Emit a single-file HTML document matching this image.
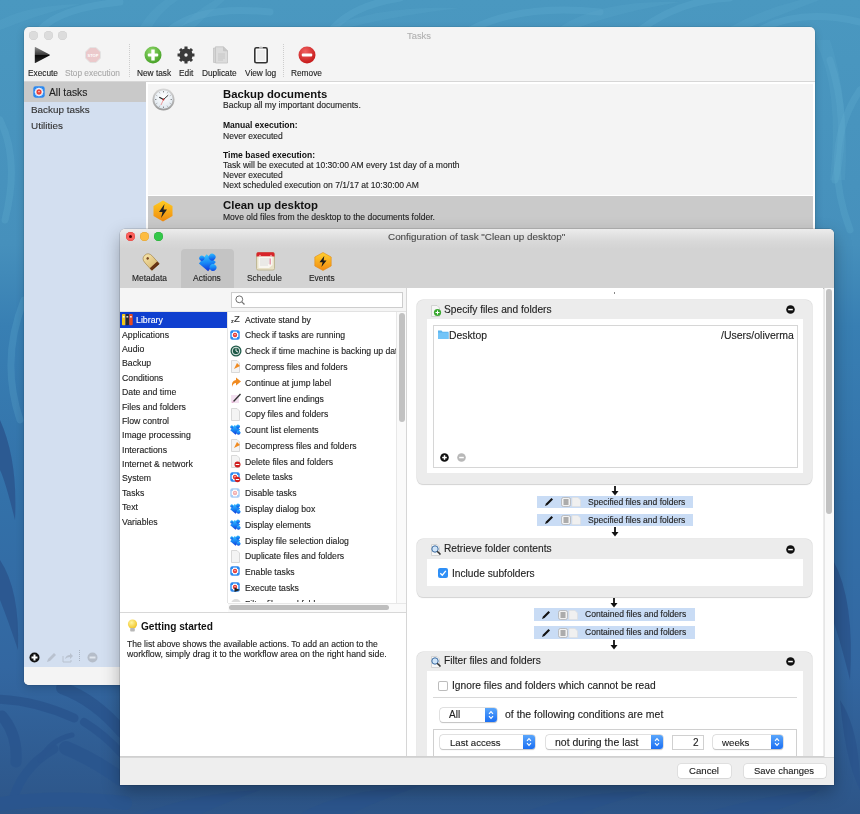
<!DOCTYPE html><html><head><meta charset="utf-8"><style>
html,body{margin:0;padding:0;}
body{width:860px;height:814px;position:relative;overflow:hidden;font-family:"Liberation Sans", sans-serif;background:#3a78ae;}
.t{position:absolute;white-space:nowrap;line-height:1;will-change:transform;-webkit-text-stroke:0.12px currentColor;}
.r{position:absolute;overflow:visible;}
.bm{display:inline-block;width:0;height:0;}
</style></head><body>
<svg class="r" style="left:0;top:0" width="860" height="814" viewBox="0 0 860 814">
<defs><linearGradient id="bgg" x1="0" y1="0" x2="0" y2="1">
<stop offset="0" stop-color="#4a98c0"/><stop offset="0.3" stop-color="#4690bc"/><stop offset="0.4" stop-color="#387fb3"/><stop offset="0.61" stop-color="#3371a9"/><stop offset="0.82" stop-color="#3367a1"/><stop offset="1" stop-color="#2d5588"/></linearGradient></defs>
<rect width="860" height="814" fill="url(#bgg)"/>
<g fill="none" stroke="#6ab4d6" stroke-opacity="0.22" stroke-width="7" stroke-linecap="round">
<path d="M40 30 Q60 8 120 2"/><path d="M170 30 Q200 5 270 12"/><path d="M330 32 Q350 6 400 -2"/>
<path d="M470 30 Q520 4 600 12"/><path d="M640 30 Q680 0 730 -2"/><path d="M760 30 Q800 8 860 22"/>
<path d="M830 60 Q850 120 835 180"/><path d="M860 90 Q820 150 850 230"/>
<path d="M0 120 Q20 160 5 220"/><path d="M24 300 Q0 360 20 420"/>
</g>
<g fill="none" stroke="#2a558e" stroke-opacity="0.9" stroke-linecap="round">
<path d="M62 688 Q95 700 122 732" stroke-width="12"/>
<path d="M-5 699 Q35 700 74 718" stroke-width="9"/>
<path d="M2 716 Q18 735 16 762" stroke-width="11"/>
<path d="M14 796 Q25 765 54 749" stroke-width="9"/>
<path d="M66 748 Q95 760 122 780" stroke-width="14"/>
<path d="M84 722 Q105 735 122 754" stroke-width="8"/>
<path d="M-5 805 Q50 795 125 803" stroke-width="14"/>
<path d="M40 760 Q50 740 72 735" stroke-width="5"/>
</g>
<g fill="#2a548c" fill-opacity="0.8">
<path d="M140 814 Q200 792 260 790 Q220 805 200 814 Z"/>
<path d="M300 814 Q340 790 420 786 Q380 800 350 814 Z"/>
<path d="M520 814 Q580 790 650 792 Q600 805 580 814 Z"/>
<path d="M700 814 Q760 796 820 790 Q800 805 760 814 Z"/>
<path d="M833 560 Q855 600 850 680 Q840 640 833 620 Z"/>
<path d="M840 700 Q860 730 860 790 Q845 760 840 700 Z"/>
<path d="M0 560 Q20 590 18 650 Q8 620 0 600 Z"/>
<path d="M0 420 Q18 460 15 520 Q5 480 0 470 Z"/>
</g>
<g fill="#5aa6cc" fill-opacity="0.25">
<path d="M0 20 Q30 5 80 4 Q40 14 0 30 Z"/><path d="M140 27 Q150 10 165 0 L178 0 Q160 12 152 27 Z"/>
<path d="M180 27 Q200 8 215 0 L225 0 Q210 12 195 27 Z"/><path d="M330 27 Q380 5 460 8 Q400 15 350 27 Z"/>
<path d="M560 27 Q600 0 680 2 Q620 12 580 27 Z"/><path d="M730 27 Q760 10 800 0 L820 0 Q780 15 750 27 Z"/>
<path d="M815 40 Q840 90 830 180 L845 180 Q850 100 830 40 Z"/>
</g>
</svg>
<div class="r" style="left:24.00px;top:27.00px;width:791px;height:658px;background:#f4f4f4;border-radius:5px;box-shadow:0 0 0 0.5px rgba(0,0,0,0.12),0 3px 8px rgba(0,0,0,0.16);"></div>
<div class="r" style="left:29.20px;top:30.50px;width:9px;height:9px;background:#dcdcdc;border-radius:50%;box-shadow:inset 0 0 0 0.5px #cfcfcf;"></div>
<div class="r" style="left:43.50px;top:30.50px;width:9px;height:9px;background:#dcdcdc;border-radius:50%;box-shadow:inset 0 0 0 0.5px #cfcfcf;"></div>
<div class="r" style="left:57.80px;top:30.50px;width:9px;height:9px;background:#dcdcdc;border-radius:50%;box-shadow:inset 0 0 0 0.5px #cfcfcf;"></div>
<div class="t" style="left:407.20px;top:30.70px;font-size:9.4px;font-weight:normal;color:#b0b0b0;"><span class="bm"></span>Tasks</div>
<svg class="r" style="left:33.00px;top:46.00px;" width="18" height="18" viewBox="0 0 18 18"><defs><linearGradient id="pg" x1="0" y1="0" x2="0" y2="1"><stop offset="0" stop-color="#8a8a8a"/><stop offset="0.48" stop-color="#3a3a3a"/><stop offset="0.52" stop-color="#0a0a0a"/><stop offset="1" stop-color="#2a2a2a"/></linearGradient></defs><path d="M1.8 1.5 Q1.5 0.8 2.3 1.1 L16.6 8.5 Q17.3 9 16.6 9.5 L2.3 16.9 Q1.5 17.2 1.8 16.5 Z" fill="url(#pg)"/></svg>
<svg class="r" style="left:85.00px;top:47.00px;" width="16" height="16" viewBox="0 0 16 16"><polygon points="5,0.5 11,0.5 15.5,5 15.5,11 11,15.5 5,15.5 0.5,11 0.5,5" fill="#ebc9cb" stroke="#e3e3e3" stroke-width="1"/><text x="8" y="10" font-size="4" text-anchor="middle" fill="#fff" font-family="Liberation Sans" font-weight="bold">STOP</text></svg>
<div class="r" style="left:128.50px;top:44.00px;width:1px;height:34px;background:repeating-linear-gradient(to bottom,#cdcdcd 0 1px,transparent 1px 2px);"></div>
<div class="r" style="left:283.20px;top:44.00px;width:1px;height:34px;background:repeating-linear-gradient(to bottom,#cdcdcd 0 1px,transparent 1px 2px);"></div>
<svg class="r" style="left:144.00px;top:46.00px;" width="18" height="18" viewBox="0 0 18 18"><defs><radialGradient id="gg" cx="0.4" cy="0.3" r="0.8"><stop offset="0" stop-color="#8fd86a"/><stop offset="1" stop-color="#3e9a1e"/></radialGradient></defs><circle cx="9" cy="9" r="8.5" fill="url(#gg)"/><rect x="7.3" y="3.5" width="3.4" height="11" fill="#fff"/><rect x="3.8" y="7.6" width="10.4" height="2.8" rx="1" fill="#fff"/></svg>
<svg class="r" style="left:177.00px;top:46.00px;" width="18" height="18" viewBox="0 0 18 18"><polygon points="15.01,7.47 17.46,7.46 17.46,10.54 15.01,10.53 14.33,12.16 16.07,13.89 13.89,16.07 12.16,14.33 10.53,15.01 10.54,17.46 7.46,17.46 7.47,15.01 5.84,14.33 4.11,16.07 1.93,13.89 3.67,12.16 2.99,10.53 0.54,10.54 0.54,7.46 2.99,7.47 3.67,5.84 1.93,4.11 4.11,1.93 5.84,3.67 7.47,2.99 7.46,0.54 10.54,0.54 10.53,2.99 12.16,3.67 13.89,1.93 16.07,4.11 14.33,5.84" fill="#3a3a3a"/><circle cx="9" cy="9" r="6.6" fill="#3a3a3a"/><circle cx="9" cy="9" r="1.7" fill="#f4f4f4"/></svg>
<svg class="r" style="left:212.00px;top:46.00px;" width="17" height="18" viewBox="0 0 17 18"><path d="M1.5 2 L10 2 L12.5 4.5 L12.5 16.5 L1.5 16.5 Z" fill="#d4d4d4" stroke="#c4c4c4" stroke-width="0.8"/><path d="M3.5 0.8 L11.5 0.8 L15.5 4.8 L15.5 17 L3.5 17 Z" fill="#dcdcdc" stroke="#c2c2c2" stroke-width="0.8"/><path d="M11.5 0.8 L11.5 4.8 L15.5 4.8" fill="#c8c8c8" stroke="#bdbdbd" stroke-width="0.6"/><path d="M6 8 H13 M6 10 H13 M6 12 H13 M6 14 H11" stroke="#c4c4c4" stroke-width="0.9"/></svg>
<svg class="r" style="left:252.00px;top:45.00px;" width="18" height="19" viewBox="0 0 18 19"><rect x="2.8" y="2.8" width="12.4" height="15" rx="1.6" fill="#fafafa" stroke="#333" stroke-width="1.6"/><rect x="5" y="5" width="8" height="10.6" fill="#ececec"/><path d="M7 4 L7 2.6 Q9 0.6 11 2.6 L11 4 Z" fill="#b8b8b8"/></svg>
<svg class="r" style="left:298.00px;top:46.00px;" width="18" height="18" viewBox="0 0 18 18"><defs><radialGradient id="rg" cx="0.4" cy="0.3" r="0.8"><stop offset="0" stop-color="#f06060"/><stop offset="1" stop-color="#c01010"/></radialGradient></defs><circle cx="9" cy="9" r="8.5" fill="url(#rg)"/><rect x="3.8" y="7.6" width="10.4" height="2.8" rx="1" fill="#fff"/></svg>
<div class="t" style="left:27.70px;top:68.71px;font-size:8.3px;font-weight:normal;color:#222;"><span class="bm"></span>Execute</div>
<div class="t" style="left:64.60px;top:68.71px;font-size:8.3px;font-weight:normal;color:#a9a9a9;"><span class="bm"></span>Stop execution</div>
<div class="t" style="left:137.00px;top:68.71px;font-size:8.3px;font-weight:normal;color:#222;"><span class="bm"></span>New task</div>
<div class="t" style="left:178.80px;top:68.71px;font-size:8.3px;font-weight:normal;color:#222;"><span class="bm"></span>Edit</div>
<div class="t" style="left:202.40px;top:68.71px;font-size:8.3px;font-weight:normal;color:#222;"><span class="bm"></span>Duplicate</div>
<div class="t" style="left:245.40px;top:68.71px;font-size:8.3px;font-weight:normal;color:#222;"><span class="bm"></span>View log</div>
<div class="t" style="left:291.40px;top:68.71px;font-size:8.3px;font-weight:normal;color:#222;"><span class="bm"></span>Remove</div>
<div class="r" style="left:24.00px;top:81.00px;width:791px;height:1px;background:#d6d6d6;"></div>
<div class="r" style="left:24.00px;top:82.00px;width:122px;height:585px;background:#d3dff0;"></div>
<div class="r" style="left:24.00px;top:81.50px;width:122px;height:20px;background:#c9c9c9;"></div>
<svg class="r" style="left:32.60px;top:86.00px;" width="12" height="12" viewBox="0 0 12 12"><rect x="0.3" y="0.3" width="11.4" height="11.4" rx="2.40" fill="#2b88f0"/><polygon points="10.80,6.00 9.48,6.93 10.16,8.40 8.55,8.55 8.40,10.16 6.93,9.48 6.00,10.80 5.07,9.48 3.60,10.16 3.45,8.55 1.84,8.40 2.52,6.93 1.20,6.00 2.52,5.07 1.84,3.60 3.45,3.45 3.60,1.84 5.07,2.52 6.00,1.20 6.93,2.52 8.40,1.84 8.55,3.45 10.16,3.60 9.48,5.07" fill="#fff"/><circle cx="6.0" cy="6.0" r="2.64" fill="#e8403a"/><circle cx="6.0" cy="5.64" r="0.72" fill="#fff"/></svg>
<div class="t" style="left:49.40px;top:87.50px;font-size:10.3px;font-weight:normal;color:#222;"><span class="bm"></span>All tasks</div>
<div class="t" style="left:31.00px;top:105.41px;font-size:9.9px;font-weight:normal;color:#333;"><span class="bm"></span>Backup tasks</div>
<div class="t" style="left:31.00px;top:121.01px;font-size:9.9px;font-weight:normal;color:#333;"><span class="bm"></span>Utilities</div>
<svg class="r" style="left:29.00px;top:652.00px;" width="11" height="11" viewBox="0 0 11 11"><circle cx="5.5" cy="5.5" r="5" fill="#111"/><rect x="4.5" y="2.5" width="2" height="6" fill="#fff"/><rect x="2.5" y="4.5" width="6" height="2" fill="#fff"/></svg>
<svg class="r" style="left:46.00px;top:652.00px;" width="11" height="11" viewBox="0 0 11 11"><path d="M1 10 L2 7 L8 1 L10 3 L4 9 Z" fill="#b9c2cf"/></svg>
<svg class="r" style="left:62.00px;top:651.00px;" width="11" height="12" viewBox="0 0 11 12"><path d="M1 5 L1 11 L9 11 L9 9" fill="none" stroke="#b9c2cf" stroke-width="1"/><path d="M3 8 Q4 4 8 4 L8 2 L11 5 L8 8 L8 6 Q5 6 3 8Z" fill="#b9c2cf"/></svg>
<div class="r" style="left:79.00px;top:650.00px;width:1px;height:12px;background:repeating-linear-gradient(to bottom,#aab4c2 0 1px,transparent 1px 2px);"></div>
<svg class="r" style="left:87.00px;top:652.00px;" width="11" height="11" viewBox="0 0 11 11"><circle cx="5.5" cy="5.5" r="5" fill="#b5bdc9"/><rect x="2.5" y="4.5" width="6" height="2" fill="#e0e6ee"/></svg>
<div class="r" style="left:24.00px;top:667.00px;width:791px;height:18px;background:#f4f4f4;border-radius:0 0 5px 5px;"></div>
<div class="r" style="left:146.00px;top:82.00px;width:669px;height:585px;background:#fff;"></div>
<div class="r" style="left:148.00px;top:84.00px;width:665px;height:111px;background:#f4f4f4;"></div>
<div class="r" style="left:148.00px;top:196.00px;width:665px;height:40px;background:#cacaca;"></div>
<svg class="r" style="left:152.00px;top:87.50px;" width="23" height="23" viewBox="0 0 23 23"><defs><radialGradient id="cg" cx="0.5" cy="0.35" r="0.7"><stop offset="0" stop-color="#ffffff"/><stop offset="1" stop-color="#dde6ee"/></radialGradient><linearGradient id="cr" x1="0" y1="0" x2="0" y2="1"><stop offset="0" stop-color="#d8d8d8"/><stop offset="1" stop-color="#9a9a9a"/></linearGradient></defs><circle cx="11.5" cy="11.5" r="11" fill="url(#cr)"/><circle cx="11.5" cy="11.5" r="9.2" fill="url(#cg)"/><path d="M11.50 4.30 L11.50 3.30" stroke="#555" stroke-width="0.9"/><path d="M15.10 5.26 L15.60 4.40" stroke="#555" stroke-width="0.5"/><path d="M17.74 7.90 L18.60 7.40" stroke="#555" stroke-width="0.5"/><path d="M18.70 11.50 L19.70 11.50" stroke="#555" stroke-width="0.9"/><path d="M17.74 15.10 L18.60 15.60" stroke="#555" stroke-width="0.5"/><path d="M15.10 17.74 L15.60 18.60" stroke="#555" stroke-width="0.5"/><path d="M11.50 18.70 L11.50 19.70" stroke="#555" stroke-width="0.9"/><path d="M7.90 17.74 L7.40 18.60" stroke="#555" stroke-width="0.5"/><path d="M5.26 15.10 L4.40 15.60" stroke="#555" stroke-width="0.5"/><path d="M4.30 11.50 L3.30 11.50" stroke="#555" stroke-width="0.9"/><path d="M5.26 7.90 L4.40 7.40" stroke="#555" stroke-width="0.5"/><path d="M7.90 5.26 L7.40 4.40" stroke="#555" stroke-width="0.5"/><path d="M11.5 11.5 L7.3 9.3" stroke="#222" stroke-width="1.2"/><path d="M11.5 11.5 L16.2 7.2" stroke="#222" stroke-width="0.9"/><path d="M11.5 11.5 L9 17" stroke="#e04040" stroke-width="0.5"/><circle cx="11.5" cy="11.5" r="0.9" fill="#c02020"/></svg>
<div class="t" style="left:223.00px;top:88.70px;font-size:11.3px;font-weight:bold;color:#111;-webkit-text-stroke:0;"><span class="bm"></span>Backup documents</div>
<div class="t" style="left:223.00px;top:101.31px;font-size:8.56px;font-weight:normal;color:#222;"><span class="bm"></span>Backup all my important documents.</div>
<div class="t" style="left:223.00px;top:121.00px;font-size:8.56px;font-weight:bold;color:#111;-webkit-text-stroke:0;"><span class="bm"></span>Manual execution:</div>
<div class="t" style="left:223.00px;top:131.50px;font-size:8.56px;font-weight:normal;color:#222;"><span class="bm"></span>Never executed</div>
<div class="t" style="left:223.00px;top:150.61px;font-size:8.56px;font-weight:bold;color:#111;-webkit-text-stroke:0;"><span class="bm"></span>Time based execution:</div>
<div class="t" style="left:223.00px;top:160.61px;font-size:8.56px;font-weight:normal;color:#222;"><span class="bm"></span>Task will be executed at 10:30:00 AM every 1st day of a month</div>
<div class="t" style="left:223.00px;top:171.00px;font-size:8.56px;font-weight:normal;color:#222;"><span class="bm"></span>Never executed</div>
<div class="t" style="left:223.00px;top:181.00px;font-size:8.56px;font-weight:normal;color:#222;"><span class="bm"></span>Next scheduled execution on 7/1/17 at 10:30:00 AM</div>
<svg class="r" style="left:153.00px;top:200.00px;" width="20" height="22" viewBox="0 0 20 22"><defs><linearGradient id="hg" x1="0" y1="0" x2="0" y2="1"><stop offset="0" stop-color="#ffcc20"/><stop offset="1" stop-color="#f08a10"/></linearGradient></defs><polygon points="10,0.5 19.5,6 19.5,16 10,21.5 0.5,16 0.5,6" fill="url(#hg)"/><path d="M11.5 4 L6 12 L9.5 12 L8 18 L14 9.5 L10.5 9.5 Z" fill="#222"/></svg>
<div class="t" style="left:223.00px;top:200.20px;font-size:11.4px;font-weight:bold;color:#111;-webkit-text-stroke:0;"><span class="bm"></span>Clean up desktop</div>
<div class="t" style="left:223.00px;top:212.50px;font-size:8.56px;font-weight:normal;color:#222;"><span class="bm"></span>Move old files from the desktop to the documents folder.</div>
<div class="r" style="left:120.00px;top:229.00px;width:714px;height:556px;background:#ececec;border-radius:5px 5px 0 0;box-shadow:0 7px 18px rgba(0,0,0,0.3),0 0 0 0.5px rgba(0,0,0,0.22);"></div>
<div class="r" style="left:120.00px;top:229.00px;width:714px;height:59px;background:linear-gradient(to bottom,#ececec 0px,#d9d9d9 12px,#d3d3d3 20px,#d3d3d3 100%);border-radius:5px 5px 0 0;"></div>
<div class="r" style="left:120.00px;top:287.50px;width:714px;height:1px;background:#c0c0c0;"></div>
<div class="r" style="left:125.50px;top:232.20px;width:9px;height:9px;background:#fc605c;border-radius:50%;box-shadow:inset 0 0 0 0.5px #e0443e;"></div>
<div class="r" style="left:139.50px;top:232.20px;width:9px;height:9px;background:#fdbc40;border-radius:50%;box-shadow:inset 0 0 0 0.5px #dea236;"></div>
<div class="r" style="left:153.80px;top:232.20px;width:9px;height:9px;background:#34c84a;border-radius:50%;box-shadow:inset 0 0 0 0.5px #27aa35;"></div>
<div class="r" style="left:128.60px;top:235.30px;width:3px;height:3px;background:#4d0000;border-radius:50%;"></div>
<div class="t" style="left:388.10px;top:232.41px;font-size:9.9px;font-weight:normal;color:#4a4a4a;"><span class="bm"></span>Configuration of task "Clean up desktop"</div>
<div class="r" style="left:181.30px;top:249.00px;width:52.7px;height:39px;background:#c4c4c4;border-radius:4px 4px 0 0;"></div>
<svg class="r" style="left:139.00px;top:250.00px;" width="23" height="23" viewBox="0 0 23 23"><defs><linearGradient id="tg" x1="0" y1="0" x2="0" y2="1"><stop offset="0" stop-color="#f4e2a8"/><stop offset="1" stop-color="#d9b870"/></linearGradient></defs><g transform="rotate(-42 11.5 11.5)"><path d="M6.5 19 L6.5 9 Q6.5 3 11.5 3 Q16.5 3 16.5 9 L16.5 19 Z" fill="url(#tg)" stroke="#a08040" stroke-width="0.6"/><rect x="6.5" y="16" width="10" height="3.2" fill="#5a2a10"/><path d="M6.5 16.8 H16.5 M6.5 17.8 H16.5" stroke="#8a4a20" stroke-width="0.4"/><circle cx="11.5" cy="7.3" r="1.3" fill="#7a4a28"/></g></svg>
<svg class="r" style="left:196.50px;top:250.50px;" width="22" height="22" viewBox="0 0 22 22"><defs><linearGradient id="pz" x1="0" y1="0" x2="1" y2="1"><stop offset="0" stop-color="#38c8ff"/><stop offset="0.5" stop-color="#1888f6"/><stop offset="1" stop-color="#1030d8"/></linearGradient></defs><g transform="rotate(40 11 11)" fill="url(#pz)"><rect x="5" y="6" width="12" height="12"/><circle cx="11" cy="4.6" r="3.4"/><circle cx="18.4" cy="12" r="3.4"/><circle cx="3.8" cy="12" r="2.6"/></g></svg>
<svg class="r" style="left:255.00px;top:251.00px;" width="21" height="20" viewBox="0 0 21 20"><rect x="1.5" y="1.5" width="18" height="17.5" rx="1.5" fill="#e9e2c8" stroke="#b8ae88" stroke-width="0.8"/><path d="M1.5 5.5 L1.5 3 Q1.5 1.2 3 1.2 L18 1.2 Q19.5 1.2 19.5 3 L19.5 5.5 Z" fill="#d8232a"/><path d="M3.5 5.5 L17.5 5.5 L17.5 14 L14 17 L3.5 17 Z" fill="#f8f6f0"/><path d="M5 8 H15 M5 10 H15 M5 12 H15 M5 14 H13" stroke="#dcdcdc" stroke-width="1"/><rect x="14.5" y="7.5" width="1.5" height="6" fill="#e8a0b0"/><circle cx="5" cy="4.3" r="0.6" fill="#fff"/><circle cx="16" cy="4.3" r="0.6" fill="#fff"/></svg>
<svg class="r" style="left:313.50px;top:251.50px;" width="18" height="19" viewBox="0 0 18 19"><defs><linearGradient id="hg2" x1="0" y1="0" x2="0" y2="1"><stop offset="0" stop-color="#ffd030"/><stop offset="1" stop-color="#f28a10"/></linearGradient></defs><polygon points="9,0.5 17.2,5 17.2,14 9,18.5 0.8,14 0.8,5" fill="url(#hg2)" stroke="#e08a18" stroke-width="0.6"/><path d="M10.3 4 L5.5 10.3 L8.6 10.3 L7.4 15 L12.5 8.5 L9.6 8.5 Z" fill="#1a1a1a"/></svg>
<div class="t" style="left:132.10px;top:274.10px;font-size:8.4px;font-weight:normal;color:#222;"><span class="bm"></span>Metadata</div>
<div class="t" style="left:193.30px;top:274.11px;font-size:8.5px;font-weight:normal;color:#222;"><span class="bm"></span>Actions</div>
<div class="t" style="left:246.70px;top:274.10px;font-size:8.4px;font-weight:normal;color:#222;"><span class="bm"></span>Schedule</div>
<div class="t" style="left:308.85px;top:274.10px;font-size:8.4px;font-weight:normal;color:#222;"><span class="bm"></span>Events</div>
<div class="r" style="left:120.00px;top:288.00px;width:287px;height:469px;background:#fff;"></div>
<div class="r" style="left:406.00px;top:288.00px;width:1px;height:469px;background:#d6d6d6;"></div>
<div class="r" style="left:120.00px;top:288.00px;width:286px;height:23px;background:#f5f5f5;"></div>
<div class="r" style="left:231.00px;top:292.00px;width:172px;height:16px;background:#fff;box-shadow:inset 0 0 0 1px #cdcdcd, inset 0 1px 1px #e0e0e0;"></div>
<svg class="r" style="left:234.50px;top:295.30px;" width="11" height="11" viewBox="0 0 11 11"><circle cx="4.3" cy="4.3" r="3.4" fill="none" stroke="#707070" stroke-width="1"/><path d="M6.8 6.8 L9.5 9.5" stroke="#707070" stroke-width="1.2"/></svg>
<div class="r" style="left:120.00px;top:311.00px;width:286px;height:1px;background:#e2e2e2;"></div>
<div class="r" style="left:120.00px;top:312.00px;width:107px;height:16px;background:#0f3fcf;"></div>
<svg class="r" style="left:122.00px;top:314.00px;" width="11" height="12" viewBox="0 0 11 12"><rect x="0" y="0" width="3.4" height="11.3" rx="0.8" fill="#f2c81a"/><rect x="3.7" y="0" width="3.2" height="11.3" rx="0.8" fill="#2a2a2a"/><rect x="7.2" y="0" width="3.5" height="11.3" rx="0.8" fill="#e84a1e"/><rect x="0.8" y="2" width="1.8" height="1.6" fill="#fff" opacity="0.8"/><rect x="4.4" y="2" width="1.8" height="1.6" fill="#fff" opacity="0.8"/><rect x="8" y="2" width="1.8" height="1.6" fill="#fff" opacity="0.8"/></svg>
<div class="t" style="left:136.20px;top:315.71px;font-size:8.8px;font-weight:normal;color:#fff;"><span class="bm"></span>Library</div>
<div class="t" style="left:122.00px;top:330.60px;font-size:8.72px;font-weight:normal;color:#222;"><span class="bm"></span>Applications</div>
<div class="t" style="left:122.00px;top:344.98px;font-size:8.72px;font-weight:normal;color:#222;"><span class="bm"></span>Audio</div>
<div class="t" style="left:122.00px;top:359.37px;font-size:8.72px;font-weight:normal;color:#222;"><span class="bm"></span>Backup</div>
<div class="t" style="left:122.00px;top:373.74px;font-size:8.72px;font-weight:normal;color:#222;"><span class="bm"></span>Conditions</div>
<div class="t" style="left:122.00px;top:388.12px;font-size:8.72px;font-weight:normal;color:#222;"><span class="bm"></span>Date and time</div>
<div class="t" style="left:122.00px;top:402.51px;font-size:8.72px;font-weight:normal;color:#222;"><span class="bm"></span>Files and folders</div>
<div class="t" style="left:122.00px;top:416.89px;font-size:8.72px;font-weight:normal;color:#222;"><span class="bm"></span>Flow control</div>
<div class="t" style="left:122.00px;top:431.26px;font-size:8.72px;font-weight:normal;color:#222;"><span class="bm"></span>Image processing</div>
<div class="t" style="left:122.00px;top:445.65px;font-size:8.72px;font-weight:normal;color:#222;"><span class="bm"></span>Interactions</div>
<div class="t" style="left:122.00px;top:460.04px;font-size:8.72px;font-weight:normal;color:#222;"><span class="bm"></span>Internet &amp; network</div>
<div class="t" style="left:122.00px;top:474.41px;font-size:8.72px;font-weight:normal;color:#222;"><span class="bm"></span>System</div>
<div class="t" style="left:122.00px;top:488.79px;font-size:8.72px;font-weight:normal;color:#222;"><span class="bm"></span>Tasks</div>
<div class="t" style="left:122.00px;top:503.18px;font-size:8.72px;font-weight:normal;color:#222;"><span class="bm"></span>Text</div>
<div class="t" style="left:122.00px;top:517.55px;font-size:8.72px;font-weight:normal;color:#222;"><span class="bm"></span>Variables</div>
<div class="r" style="left:227.00px;top:312.00px;width:1px;height:291px;background:#e4e4e4;"></div>
<div class="r" style="left:228.00px;top:312.00px;width:168px;height:290px;overflow:hidden;">
<div class="t" style="left:2.80px;top:6.60px;font-size:5.5px;font-weight:normal;color:#333;"><span class="bm"></span>z</div>
<div class="t" style="left:5.80px;top:2.31px;font-size:9.5px;font-weight:normal;color:#333;"><span class="bm"></span>Z</div>
<div class="t" style="left:16.50px;top:3.60px;font-size:8.66px;font-weight:normal;color:#222;"><span class="bm"></span>Activate stand by</div>
<svg class="r" style="left:2.30px;top:17.78px;" width="10" height="10" viewBox="0 0 10 10"><rect x="0.3" y="0.3" width="9.4" height="9.4" rx="2.00" fill="#2b88f0"/><polygon points="9.00,5.00 7.90,5.78 8.46,7.00 7.12,7.12 7.00,8.46 5.78,7.90 5.00,9.00 4.22,7.90 3.00,8.46 2.88,7.12 1.54,7.00 2.10,5.78 1.00,5.00 2.10,4.22 1.54,3.00 2.88,2.88 3.00,1.54 4.22,2.10 5.00,1.00 5.78,2.10 7.00,1.54 7.12,2.88 8.46,3.00 7.90,4.22" fill="#fff"/><circle cx="5.0" cy="5.0" r="2.20" fill="#e8403a"/><circle cx="5.0" cy="4.70" r="0.60" fill="#fff"/></svg>
<div class="t" style="left:16.50px;top:19.40px;font-size:8.66px;font-weight:normal;color:#222;"><span class="bm"></span>Check if tasks are running</div>
<svg class="r" style="left:2.30px;top:32.56px;" width="12" height="12" viewBox="0 0 12 12"><circle cx="6" cy="6" r="5.5" fill="#1d5a48"/><circle cx="6" cy="6" r="3.8" fill="none" stroke="#fff" stroke-width="0.9"/><path d="M6 3.5 L6 6 L8 7" stroke="#fff" stroke-width="0.9" fill="none"/></svg>
<div class="t" style="left:16.50px;top:35.17px;font-size:8.66px;font-weight:normal;color:#222;"><span class="bm"></span>Check if time machine is backing up dat</div>
<svg class="r" style="left:2.30px;top:48.34px;" width="11" height="13" viewBox="0 0 11 13"><path d="M1.5 0.5 L7 0.5 L9.5 3 L9.5 12.5 L1.5 12.5 Z" fill="#f4f4f4" stroke="#d0d0d0" stroke-width="0.8"/><path d="M4 9 L7 3 L10 6 Z" fill="#f08a20"/></svg>
<div class="t" style="left:16.50px;top:50.95px;font-size:8.66px;font-weight:normal;color:#222;"><span class="bm"></span>Compress files and folders</div>
<svg class="r" style="left:2.30px;top:64.12px;" width="12" height="12" viewBox="0 0 12 12"><path d="M2 11 Q1 5 6 4 L6 1.5 L11 5.5 L6 9.5 L6 7 Q3 7 2 11 Z" fill="#f08a20"/></svg>
<div class="t" style="left:16.50px;top:66.73px;font-size:8.66px;font-weight:normal;color:#222;"><span class="bm"></span>Continue at jump label</div>
<svg class="r" style="left:2.30px;top:79.90px;" width="12" height="12" viewBox="0 0 12 12"><rect x="1" y="3" width="8" height="8" fill="#f3e0f0"/><path d="M3 9 L10 1.5 L11 2.5 L4 10 Z" fill="#333"/><path d="M2 11 L3 9 L4 10 Z" fill="#d080b0"/></svg>
<div class="t" style="left:16.50px;top:82.51px;font-size:8.66px;font-weight:normal;color:#222;"><span class="bm"></span>Convert line endings</div>
<svg class="r" style="left:2.30px;top:95.68px;" width="11" height="13" viewBox="0 0 11 13"><path d="M1.5 0.5 L7 0.5 L9.5 3 L9.5 12.5 L1.5 12.5 Z" fill="#f4f4f4" stroke="#d0d0d0" stroke-width="0.8"/></svg>
<div class="t" style="left:16.50px;top:98.28px;font-size:8.66px;font-weight:normal;color:#222;"><span class="bm"></span>Copy files and folders</div>
<svg class="r" style="left:1.30px;top:111.26px;" width="13" height="13" viewBox="0 0 13 13"><defs><linearGradient id="pzs" x1="0" y1="0" x2="1" y2="1"><stop offset="0" stop-color="#38c4ff"/><stop offset="0.5" stop-color="#1888f6"/><stop offset="1" stop-color="#1238d6"/></linearGradient></defs><g transform="rotate(40 6.5 6.5)" fill="url(#pzs)"><rect x="3" y="3.5" width="7" height="7"/><circle cx="6.5" cy="2.6" r="2"/><circle cx="10.9" cy="7" r="2"/><circle cx="2.1" cy="7" r="1.6"/></g></svg>
<div class="t" style="left:16.50px;top:114.08px;font-size:8.66px;font-weight:normal;color:#222;"><span class="bm"></span>Count list elements</div>
<svg class="r" style="left:2.30px;top:127.24px;" width="11" height="13" viewBox="0 0 11 13"><path d="M1.5 0.5 L7 0.5 L9.5 3 L9.5 12.5 L1.5 12.5 Z" fill="#f4f4f4" stroke="#d0d0d0" stroke-width="0.8"/><path d="M4 9 L7 3 L10 6 Z" fill="#f08a20"/></svg>
<div class="t" style="left:16.50px;top:129.84px;font-size:8.66px;font-weight:normal;color:#222;"><span class="bm"></span>Decompress files and folders</div>
<svg class="r" style="left:2.30px;top:143.02px;" width="11" height="13" viewBox="0 0 11 13"><path d="M1.5 0.5 L7 0.5 L9.5 3 L9.5 12.5 L1.5 12.5 Z" fill="#f4f4f4" stroke="#d0d0d0" stroke-width="0.8"/><circle cx="7.5" cy="9.5" r="3" fill="#d02020"/><rect x="5.7" y="9" width="3.6" height="1" fill="#fff"/></svg>
<div class="t" style="left:16.50px;top:145.63px;font-size:8.66px;font-weight:normal;color:#222;"><span class="bm"></span>Delete files and folders</div>
<svg class="r" style="left:2.30px;top:159.80px;" width="10" height="10" viewBox="0 0 10 10"><rect x="0.3" y="0.3" width="9.4" height="9.4" rx="2.00" fill="#2b88f0"/><polygon points="9.00,5.00 7.90,5.78 8.46,7.00 7.12,7.12 7.00,8.46 5.78,7.90 5.00,9.00 4.22,7.90 3.00,8.46 2.88,7.12 1.54,7.00 2.10,5.78 1.00,5.00 2.10,4.22 1.54,3.00 2.88,2.88 3.00,1.54 4.22,2.10 5.00,1.00 5.78,2.10 7.00,1.54 7.12,2.88 8.46,3.00 7.90,4.22" fill="#fff"/><circle cx="5.0" cy="5.0" r="2.20" fill="#e8403a"/><circle cx="5.0" cy="4.70" r="0.60" fill="#fff"/><circle cx="7.5" cy="7.5" r="2.8" fill="#d02020"/><rect x="5.8" y="7" width="3.4" height="1" fill="#fff"/></svg>
<div class="t" style="left:16.50px;top:161.41px;font-size:8.66px;font-weight:normal;color:#222;"><span class="bm"></span>Delete tasks</div>
<svg class="r" style="left:2.30px;top:175.58px;" width="10" height="10" viewBox="0 0 10 10"><rect x="0.3" y="0.3" width="9.4" height="9.4" rx="2.00" fill="#a9cdf5"/><polygon points="9.00,5.00 7.90,5.78 8.46,7.00 7.12,7.12 7.00,8.46 5.78,7.90 5.00,9.00 4.22,7.90 3.00,8.46 2.88,7.12 1.54,7.00 2.10,5.78 1.00,5.00 2.10,4.22 1.54,3.00 2.88,2.88 3.00,1.54 4.22,2.10 5.00,1.00 5.78,2.10 7.00,1.54 7.12,2.88 8.46,3.00 7.90,4.22" fill="#fff"/><circle cx="5.0" cy="5.0" r="2.20" fill="#f3b0b0"/><circle cx="5.0" cy="4.70" r="0.60" fill="#fff"/></svg>
<div class="t" style="left:16.50px;top:177.19px;font-size:8.66px;font-weight:normal;color:#222;"><span class="bm"></span>Disable tasks</div>
<svg class="r" style="left:1.30px;top:190.16px;" width="13" height="13" viewBox="0 0 13 13"><defs><linearGradient id="pzs" x1="0" y1="0" x2="1" y2="1"><stop offset="0" stop-color="#38c4ff"/><stop offset="0.5" stop-color="#1888f6"/><stop offset="1" stop-color="#1238d6"/></linearGradient></defs><g transform="rotate(40 6.5 6.5)" fill="url(#pzs)"><rect x="3" y="3.5" width="7" height="7"/><circle cx="6.5" cy="2.6" r="2"/><circle cx="10.9" cy="7" r="2"/><circle cx="2.1" cy="7" r="1.6"/></g></svg>
<div class="t" style="left:16.50px;top:192.96px;font-size:8.66px;font-weight:normal;color:#222;"><span class="bm"></span>Display dialog box</div>
<svg class="r" style="left:1.30px;top:205.94px;" width="13" height="13" viewBox="0 0 13 13"><defs><linearGradient id="pzs" x1="0" y1="0" x2="1" y2="1"><stop offset="0" stop-color="#38c4ff"/><stop offset="0.5" stop-color="#1888f6"/><stop offset="1" stop-color="#1238d6"/></linearGradient></defs><g transform="rotate(40 6.5 6.5)" fill="url(#pzs)"><rect x="3" y="3.5" width="7" height="7"/><circle cx="6.5" cy="2.6" r="2"/><circle cx="10.9" cy="7" r="2"/><circle cx="2.1" cy="7" r="1.6"/></g></svg>
<div class="t" style="left:16.50px;top:208.74px;font-size:8.66px;font-weight:normal;color:#222;"><span class="bm"></span>Display elements</div>
<svg class="r" style="left:1.30px;top:221.72px;" width="13" height="13" viewBox="0 0 13 13"><defs><linearGradient id="pzs" x1="0" y1="0" x2="1" y2="1"><stop offset="0" stop-color="#38c4ff"/><stop offset="0.5" stop-color="#1888f6"/><stop offset="1" stop-color="#1238d6"/></linearGradient></defs><g transform="rotate(40 6.5 6.5)" fill="url(#pzs)"><rect x="3" y="3.5" width="7" height="7"/><circle cx="6.5" cy="2.6" r="2"/><circle cx="10.9" cy="7" r="2"/><circle cx="2.1" cy="7" r="1.6"/></g></svg>
<div class="t" style="left:16.50px;top:224.52px;font-size:8.66px;font-weight:normal;color:#222;"><span class="bm"></span>Display file selection dialog</div>
<svg class="r" style="left:2.30px;top:237.70px;" width="11" height="13" viewBox="0 0 11 13"><path d="M1.5 0.5 L7 0.5 L9.5 3 L9.5 12.5 L1.5 12.5 Z" fill="#f4f4f4" stroke="#d0d0d0" stroke-width="0.8"/></svg>
<div class="t" style="left:16.50px;top:240.31px;font-size:8.66px;font-weight:normal;color:#222;"><span class="bm"></span>Duplicate files and folders</div>
<svg class="r" style="left:2.30px;top:254.48px;" width="10" height="10" viewBox="0 0 10 10"><rect x="0.3" y="0.3" width="9.4" height="9.4" rx="2.00" fill="#2b88f0"/><polygon points="9.00,5.00 7.90,5.78 8.46,7.00 7.12,7.12 7.00,8.46 5.78,7.90 5.00,9.00 4.22,7.90 3.00,8.46 2.88,7.12 1.54,7.00 2.10,5.78 1.00,5.00 2.10,4.22 1.54,3.00 2.88,2.88 3.00,1.54 4.22,2.10 5.00,1.00 5.78,2.10 7.00,1.54 7.12,2.88 8.46,3.00 7.90,4.22" fill="#fff"/><circle cx="5.0" cy="5.0" r="2.20" fill="#e8403a"/><circle cx="5.0" cy="4.70" r="0.60" fill="#fff"/></svg>
<div class="t" style="left:16.50px;top:256.09px;font-size:8.66px;font-weight:normal;color:#222;"><span class="bm"></span>Enable tasks</div>
<svg class="r" style="left:2.30px;top:270.26px;" width="10" height="10" viewBox="0 0 10 10"><rect x="0.3" y="0.3" width="9.4" height="9.4" rx="2.00" fill="#2b88f0"/><polygon points="9.00,5.00 7.90,5.78 8.46,7.00 7.12,7.12 7.00,8.46 5.78,7.90 5.00,9.00 4.22,7.90 3.00,8.46 2.88,7.12 1.54,7.00 2.10,5.78 1.00,5.00 2.10,4.22 1.54,3.00 2.88,2.88 3.00,1.54 4.22,2.10 5.00,1.00 5.78,2.10 7.00,1.54 7.12,2.88 8.46,3.00 7.90,4.22" fill="#fff"/><circle cx="5.0" cy="5.0" r="2.20" fill="#e8403a"/><circle cx="5.0" cy="4.70" r="0.60" fill="#fff"/><path d="M4.5 5.5 L10 8 L4.5 10 Z" fill="#222"/></svg>
<div class="t" style="left:16.50px;top:271.87px;font-size:8.66px;font-weight:normal;color:#222;"><span class="bm"></span>Execute tasks</div>
<svg class="r" style="left:2.30px;top:286.04px;" width="12" height="12" viewBox="0 0 12 12"><circle cx="6" cy="6" r="5" fill="#ddd"/></svg>
<div class="t" style="left:16.50px;top:287.65px;font-size:8.66px;font-weight:normal;color:#222;"><span class="bm"></span>Filter files and folders</div>
</div>
<div class="r" style="left:396.00px;top:312.00px;width:10px;height:291px;background:#fafafa;box-shadow:inset 1px 0 0 #e8e8e8;"></div>
<div class="r" style="left:399.00px;top:313.00px;width:5.5px;height:108.5px;background:#c2c2c2;border-radius:3px;"></div>
<div class="r" style="left:228.00px;top:603.00px;width:178px;height:9px;background:#fafafa;box-shadow:inset 0 1px 0 #e8e8e8;"></div>
<div class="r" style="left:229.00px;top:604.80px;width:160px;height:5.3px;background:#bebebe;border-radius:3px;"></div>
<div class="r" style="left:120.00px;top:612.00px;width:286px;height:1px;background:#d8d8d8;"></div>
<svg class="r" style="left:127.00px;top:619.00px;" width="11" height="14" viewBox="0 0 11 14"><defs><radialGradient id="lb" cx="0.4" cy="0.35" r="0.7"><stop offset="0" stop-color="#fff6a0"/><stop offset="1" stop-color="#f0c020"/></radialGradient></defs><circle cx="5.5" cy="5" r="4.6" fill="url(#lb)"/><rect x="3.2" y="9" width="4.6" height="3.5" rx="0.8" fill="#b8b8b8"/></svg>
<div class="t" style="left:141.40px;top:621.60px;font-size:10.12px;font-weight:bold;color:#111;-webkit-text-stroke:0;"><span class="bm"></span>Getting started</div>
<div class="t" style="left:127.00px;top:639.71px;font-size:8.56px;font-weight:normal;color:#222;"><span class="bm"></span>The list above shows the available actions. To add an action to the</div>
<div class="t" style="left:127.00px;top:649.91px;font-size:8.75px;font-weight:normal;color:#222;"><span class="bm"></span>workflow, simply drag it to the workflow area on the right hand side.</div>
<div class="r" style="left:120.00px;top:756.00px;width:713px;height:1px;background:#d0d0d0;"></div>
<div class="r" style="left:407.00px;top:288.00px;width:416px;height:468px;background:#fff;"></div>
<div class="r" style="left:613.50px;top:292.00px;width:1.6px;height:1.6px;background:#888;"></div>
<div class="r" style="left:823.50px;top:288.00px;width:10.5px;height:468.5px;background:#fafafa;box-shadow:inset 1px 0 0 #e6e6e6;"></div>
<div class="r" style="left:825.80px;top:289.00px;width:6.4px;height:225px;background:#c2c2c2;border-radius:3px;"></div>
<div class="r" style="left:417.00px;top:299.80px;width:395px;height:183.8px;background:#ececec;border-radius:6px;box-shadow:0 0 0 0.5px #dadada, 0 0.5px 1px #cfcfcf;"></div>
<div class="t" style="left:444.30px;top:304.70px;font-size:10.2px;font-weight:normal;color:#222;"><span class="bm"></span>Specify files and folders</div>
<svg class="r" style="left:786.00px;top:305.00px;" width="9" height="9" viewBox="0 0 9 9"><circle cx="4.5" cy="4.5" r="4.3" fill="#111"/><rect x="2.2" y="3.8" width="4.6" height="1.5" fill="#fff"/></svg>
<svg class="r" style="left:430.00px;top:304.50px;" width="12" height="12" viewBox="0 0 12 12"><path d="M1.5 0.5 L7 0.5 L9.5 3 L9.5 11.5 L1.5 11.5 Z" fill="#f6f6f6" stroke="#ccc" stroke-width="0.8"/><circle cx="7.5" cy="7.5" r="3.6" fill="#3aa830"/><rect x="5.5" y="7" width="4" height="1" fill="#fff"/><rect x="7" y="5.5" width="1" height="4" fill="#fff"/></svg>
<div class="r" style="left:427.00px;top:319.00px;width:376px;height:154px;background:#fff;"></div>
<div class="r" style="left:433.00px;top:325.00px;width:365px;height:143px;background:#fff;box-shadow:inset 0 0 0 1px #d6d6d6;"></div>
<svg class="r" style="left:437.60px;top:330.30px;" width="10.5" height="9" viewBox="0 0 10.5 9"><path d="M0 0.5 L3.5 0.5 L4.5 1.8 L10.5 1.8 L10.5 9 L0 9 Z" fill="#5cb4ee"/><rect x="0" y="2.6" width="10.5" height="6.4" fill="#72c4f8"/></svg>
<div class="t" style="left:448.50px;top:330.51px;font-size:10.36px;font-weight:normal;color:#222;"><span class="bm"></span>Desktop</div>
<div class="t" style="left:720.50px;top:329.50px;font-size:10.5px;font-weight:normal;color:#222;"><span class="bm"></span>/Users/oliverma</div>
<svg class="r" style="left:440.00px;top:453.00px;" width="9" height="9" viewBox="0 0 9 9"><circle cx="4.5" cy="4.5" r="4.3" fill="#111"/><rect x="2.2" y="3.8" width="4.6" height="1.5" fill="#fff"/><rect x="3.75" y="2.2" width="1.5" height="4.6" fill="#fff"/></svg>
<svg class="r" style="left:457.00px;top:453.00px;" width="9" height="9" viewBox="0 0 9 9"><circle cx="4.5" cy="4.5" r="4.3" fill="#b8b8b8"/><rect x="2.2" y="3.8" width="4.6" height="1.5" fill="#fff"/></svg>
<svg class="r" style="left:610.70px;top:485.50px;" width="8" height="10" viewBox="0 0 8 10"><rect x="3.1" y="0" width="1.8" height="6" fill="#111"/><path d="M0.5 5 L7.5 5 L4 9.5 Z" fill="#111"/></svg>
<div class="r" style="left:537.00px;top:495.60px;width:156px;height:12.5px;background:#c9dcf5;"></div>
<svg class="r" style="left:543.50px;top:497.10px;" width="10" height="10" viewBox="0 0 10 10"><path d="M1 9 L2 6.5 L7.5 1 L9 2.5 L3.5 8 Z" fill="#111"/></svg>
<svg class="r" style="left:560.50px;top:497.10px;" width="22" height="10" viewBox="0 0 22 10"><rect x="0.5" y="0.5" width="9" height="9" rx="2" fill="#f2f2f2" stroke="#aaa" stroke-width="0.7"/><path d="M2.5 3 H7.5 M2.5 5 H7.5 M2.5 7 H7.5" stroke="#555" stroke-width="0.9"/><path d="M11 0.5 L17 0.5 L19.5 3 L19.5 9.5 L11 9.5 Z" fill="#f0f0f0" stroke="#ddd" stroke-width="0.6"/></svg>
<div class="t" style="left:587.90px;top:497.71px;font-size:8.55px;font-weight:normal;color:#222;"><span class="bm"></span>Specified files and folders</div>
<div class="r" style="left:537.00px;top:513.50px;width:156px;height:12.5px;background:#c9dcf5;"></div>
<svg class="r" style="left:543.50px;top:515.00px;" width="10" height="10" viewBox="0 0 10 10"><path d="M1 9 L2 6.5 L7.5 1 L9 2.5 L3.5 8 Z" fill="#111"/></svg>
<svg class="r" style="left:560.50px;top:515.00px;" width="22" height="10" viewBox="0 0 22 10"><rect x="0.5" y="0.5" width="9" height="9" rx="2" fill="#f2f2f2" stroke="#aaa" stroke-width="0.7"/><path d="M2.5 3 H7.5 M2.5 5 H7.5 M2.5 7 H7.5" stroke="#555" stroke-width="0.9"/><path d="M11 0.5 L17 0.5 L19.5 3 L19.5 9.5 L11 9.5 Z" fill="#f0f0f0" stroke="#ddd" stroke-width="0.6"/></svg>
<div class="t" style="left:587.90px;top:515.60px;font-size:8.55px;font-weight:normal;color:#222;"><span class="bm"></span>Specified files and folders</div>
<svg class="r" style="left:610.70px;top:527.00px;" width="8" height="10" viewBox="0 0 8 10"><rect x="3.1" y="0" width="1.8" height="6" fill="#111"/><path d="M0.5 5 L7.5 5 L4 9.5 Z" fill="#111"/></svg>
<div class="r" style="left:417.00px;top:539.00px;width:395px;height:57.5px;background:#ececec;border-radius:6px;box-shadow:0 0 0 0.5px #dadada, 0 0.5px 1px #cfcfcf;"></div>
<div class="t" style="left:444.30px;top:544.20px;font-size:10.2px;font-weight:normal;color:#222;"><span class="bm"></span>Retrieve folder contents</div>
<svg class="r" style="left:786.00px;top:544.50px;" width="9" height="9" viewBox="0 0 9 9"><circle cx="4.5" cy="4.5" r="4.3" fill="#111"/><rect x="2.2" y="3.8" width="4.6" height="1.5" fill="#fff"/></svg>
<svg class="r" style="left:430.00px;top:544.00px;" width="12" height="12" viewBox="0 0 12 12"><path d="M1.5 0.5 L7 0.5 L9.5 3 L9.5 11.5 L1.5 11.5 Z" fill="#f6f6f6" stroke="#ccc" stroke-width="0.8"/><circle cx="5" cy="5" r="3.2" fill="#cfe4f8" stroke="#3a6aa0" stroke-width="1"/><path d="M7.2 7.2 L10.5 10.5" stroke="#333" stroke-width="1.6"/></svg>
<div class="r" style="left:426.50px;top:559.00px;width:376.5px;height:27px;background:#fff;"></div>
<svg class="r" style="left:438.00px;top:568.40px;" width="10" height="10" viewBox="0 0 10 10"><rect x="0" y="0" width="10" height="10" rx="2" fill="#2f8ff6"/><path d="M2.3 5.2 L4.3 7.2 L7.8 2.8" fill="none" stroke="#fff" stroke-width="1.3"/></svg>
<div class="t" style="left:452.30px;top:568.51px;font-size:10.2px;font-weight:normal;color:#222;"><span class="bm"></span>Include subfolders</div>
<svg class="r" style="left:610.20px;top:598.00px;" width="8" height="10" viewBox="0 0 8 10"><rect x="3.1" y="0" width="1.8" height="6" fill="#111"/><path d="M0.5 5 L7.5 5 L4 9.5 Z" fill="#111"/></svg>
<div class="r" style="left:534.00px;top:608.00px;width:161px;height:12.5px;background:#c9dcf5;"></div>
<svg class="r" style="left:540.50px;top:609.50px;" width="10" height="10" viewBox="0 0 10 10"><path d="M1 9 L2 6.5 L7.5 1 L9 2.5 L3.5 8 Z" fill="#111"/></svg>
<svg class="r" style="left:557.50px;top:609.50px;" width="22" height="10" viewBox="0 0 22 10"><rect x="0.5" y="0.5" width="9" height="9" rx="2" fill="#f2f2f2" stroke="#aaa" stroke-width="0.7"/><path d="M2.5 3 H7.5 M2.5 5 H7.5 M2.5 7 H7.5" stroke="#555" stroke-width="0.9"/><path d="M11 0.5 L17 0.5 L19.5 3 L19.5 9.5 L11 9.5 Z" fill="#f0f0f0" stroke="#ddd" stroke-width="0.6"/></svg>
<div class="t" style="left:584.70px;top:610.10px;font-size:8.55px;font-weight:normal;color:#222;"><span class="bm"></span>Contained files and folders</div>
<div class="r" style="left:534.00px;top:626.00px;width:161px;height:12.5px;background:#c9dcf5;"></div>
<svg class="r" style="left:540.50px;top:627.50px;" width="10" height="10" viewBox="0 0 10 10"><path d="M1 9 L2 6.5 L7.5 1 L9 2.5 L3.5 8 Z" fill="#111"/></svg>
<svg class="r" style="left:557.50px;top:627.50px;" width="22" height="10" viewBox="0 0 22 10"><rect x="0.5" y="0.5" width="9" height="9" rx="2" fill="#f2f2f2" stroke="#aaa" stroke-width="0.7"/><path d="M2.5 3 H7.5 M2.5 5 H7.5 M2.5 7 H7.5" stroke="#555" stroke-width="0.9"/><path d="M11 0.5 L17 0.5 L19.5 3 L19.5 9.5 L11 9.5 Z" fill="#f0f0f0" stroke="#ddd" stroke-width="0.6"/></svg>
<div class="t" style="left:584.70px;top:628.10px;font-size:8.55px;font-weight:normal;color:#222;"><span class="bm"></span>Contained files and folders</div>
<svg class="r" style="left:610.20px;top:640.00px;" width="8" height="10" viewBox="0 0 8 10"><rect x="3.1" y="0" width="1.8" height="6" fill="#111"/><path d="M0.5 5 L7.5 5 L4 9.5 Z" fill="#111"/></svg>
<div class="r" style="left:407.00px;top:288.00px;width:416px;height:468px;overflow:hidden;">
<div class="r" style="left:10.00px;top:363.80px;width:395px;height:148.20000000000005px;background:#ececec;border-radius:6px;box-shadow:0 0 0 0.5px #dadada, 0 0.5px 1px #cfcfcf;"></div>
<div class="t" style="left:37.30px;top:368.20px;font-size:10.2px;font-weight:normal;color:#222;"><span class="bm"></span>Filter files and folders</div>
<svg class="r" style="left:379.00px;top:368.50px;" width="9" height="9" viewBox="0 0 9 9"><circle cx="4.5" cy="4.5" r="4.3" fill="#111"/><rect x="2.2" y="3.8" width="4.6" height="1.5" fill="#fff"/></svg>
<svg class="r" style="left:23.00px;top:368.00px;" width="12" height="12" viewBox="0 0 12 12"><path d="M1.5 0.5 L7 0.5 L9.5 3 L9.5 11.5 L1.5 11.5 Z" fill="#f6f6f6" stroke="#ccc" stroke-width="0.8"/><circle cx="5" cy="5" r="3.2" fill="#cfe4f8" stroke="#3a6aa0" stroke-width="1"/><path d="M7.2 7.2 L10.5 10.5" stroke="#333" stroke-width="1.6"/></svg>
<div class="r" style="left:20.00px;top:382.50px;width:376px;height:130px;background:#fff;"></div>
<div class="r" style="left:31.00px;top:393.00px;width:10px;height:10px;background:#fff;border-radius:2px;box-shadow:inset 0 0 0 1px #bcbcbc;"></div>
<div class="t" style="left:45.20px;top:393.00px;font-size:10.24px;font-weight:normal;color:#222;"><span class="bm"></span>Ignore files and folders which cannot be read</div>
<div class="r" style="left:26.00px;top:409.00px;width:364px;height:1px;background:#d8d8d8;"></div>
<div class="r" style="left:33.00px;top:419.50px;width:57px;height:14.5px;background:#fff;border-radius:3px;box-shadow:0 0 0 0.5px #c8c8c8,0 0.5px 1px rgba(0,0,0,0.25);"></div>
<div class="r" style="left:78.30px;top:419.50px;width:11.7px;height:14.5px;background:linear-gradient(to bottom,#5aa6fb,#1b6ff3);border-radius:0 3px 3px 0;"></div>
<svg class="r" style="left:81.15px;top:421.75px;" width="6" height="10" viewBox="0 0 6 10"><path d="M1 3.8 L3 1.6 L5 3.8 M1 6.2 L3 8.4 L5 6.2" fill="none" stroke="#fff" stroke-width="1.1"/></svg>
<div class="t" style="left:41.90px;top:422.21px;font-size:10px;font-weight:normal;color:#222;"><span class="bm"></span>All</div>
<div class="t" style="left:97.70px;top:422.41px;font-size:10.47px;font-weight:normal;color:#222;"><span class="bm"></span>of the following conditions are met</div>
<div class="r" style="left:26.00px;top:440.50px;width:364px;height:40px;background:#fff;box-shadow:inset 0 0 0 1px #d0d0d0;"></div>
<div class="r" style="left:33.30px;top:447.00px;width:94.49999999999994px;height:14.299999999999955px;background:#fff;border-radius:3px;box-shadow:0 0 0 0.5px #c8c8c8,0 0.5px 1px rgba(0,0,0,0.25);"></div>
<div class="r" style="left:116.10px;top:447.00px;width:11.7px;height:14.299999999999955px;background:linear-gradient(to bottom,#5aa6fb,#1b6ff3);border-radius:0 3px 3px 0;"></div>
<svg class="r" style="left:118.95px;top:449.15px;" width="6" height="10" viewBox="0 0 6 10"><path d="M1 3.8 L3 1.6 L5 3.8 M1 6.2 L3 8.4 L5 6.2" fill="none" stroke="#fff" stroke-width="1.1"/></svg>
<div class="t" style="left:42.70px;top:449.51px;font-size:9.6px;font-weight:normal;color:#222;"><span class="bm"></span>Last access</div>
<div class="r" style="left:138.60px;top:447.00px;width:117.10000000000002px;height:14.299999999999955px;background:#fff;border-radius:3px;box-shadow:0 0 0 0.5px #c8c8c8,0 0.5px 1px rgba(0,0,0,0.25);"></div>
<div class="r" style="left:244.00px;top:447.00px;width:11.7px;height:14.299999999999955px;background:linear-gradient(to bottom,#5aa6fb,#1b6ff3);border-radius:0 3px 3px 0;"></div>
<svg class="r" style="left:246.85px;top:449.15px;" width="6" height="10" viewBox="0 0 6 10"><path d="M1 3.8 L3 1.6 L5 3.8 M1 6.2 L3 8.4 L5 6.2" fill="none" stroke="#fff" stroke-width="1.1"/></svg>
<div class="t" style="left:148.00px;top:448.50px;font-size:10.5px;font-weight:normal;color:#222;"><span class="bm"></span>not during the last</div>
<div class="r" style="left:265.40px;top:447.30px;width:31.3px;height:15px;background:#fff;box-shadow:inset 0 0 0 1px #d0d0d0;"></div>
<div class="t" style="left:286.00px;top:450.00px;font-size:10px;font-weight:normal;color:#222;"><span class="bm"></span>2</div>
<div class="r" style="left:305.60px;top:447.00px;width:70.39999999999998px;height:14.299999999999955px;background:#fff;border-radius:3px;box-shadow:0 0 0 0.5px #c8c8c8,0 0.5px 1px rgba(0,0,0,0.25);"></div>
<div class="r" style="left:364.30px;top:447.00px;width:11.7px;height:14.299999999999955px;background:linear-gradient(to bottom,#5aa6fb,#1b6ff3);border-radius:0 3px 3px 0;"></div>
<svg class="r" style="left:367.15px;top:449.15px;" width="6" height="10" viewBox="0 0 6 10"><path d="M1 3.8 L3 1.6 L5 3.8 M1 6.2 L3 8.4 L5 6.2" fill="none" stroke="#fff" stroke-width="1.1"/></svg>
<div class="t" style="left:314.60px;top:449.51px;font-size:9.7px;font-weight:normal;color:#222;"><span class="bm"></span>weeks</div>
</div>
<div class="r" style="left:120.00px;top:757.00px;width:714px;height:28px;background:#eeeeee;"></div>
<div class="r" style="left:120.00px;top:756.50px;width:714px;height:1px;background:#d6d6d6;"></div>
<div class="r" style="left:678.40px;top:764.00px;width:52.39999999999998px;height:13.6px;background:#fff;border-radius:3px;box-shadow:0 0 0 0.5px #cfcfcf,0 0.5px 0.5px rgba(0,0,0,0.12);"></div>
<div class="t" style="left:689.00px;top:766.21px;font-size:9.65px;font-weight:normal;color:#222;"><span class="bm"></span>Cancel</div>
<div class="r" style="left:743.60px;top:764.00px;width:82.39999999999998px;height:13.6px;background:#fff;border-radius:3px;box-shadow:0 0 0 0.5px #cfcfcf,0 0.5px 0.5px rgba(0,0,0,0.12);"></div>
<div class="t" style="left:754.40px;top:766.20px;font-size:9.46px;font-weight:normal;color:#222;"><span class="bm"></span>Save changes</div>
</body></html>
